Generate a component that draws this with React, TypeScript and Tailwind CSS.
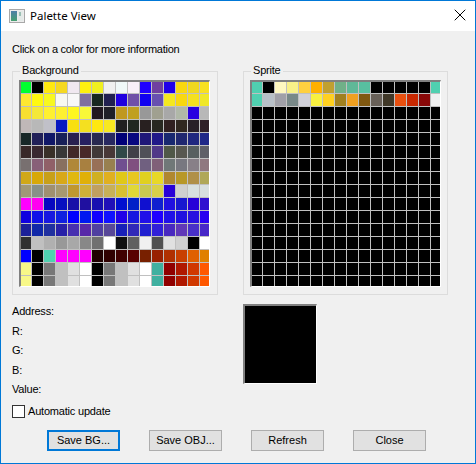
import { X } from 'lucide-react'

// ─── Palette data ─────────────────────────────────────────────────────────────

const K = '#000000'

const BG_PALETTE = [
  ['#00ff30', K, '#ffe810', '#f5d820', '#f0e8f0', '#fff010', '#f0f020', '#f0f0f0', '#f0f8f8', '#f8f0f8', '#2000ff', '#7040a0', '#2000e8', '#f8d810', '#f0d820', '#f8e020'],
  ['#ffe830', '#fff810', '#f8f820', '#f8f8f0', '#f8f8f8', '#806fa0', '#182820', '#202050', '#2000e0', '#7050a8', '#1000f0', '#6850b0', '#f4e820', '#f8d810', '#f4e020', '#f0e828'],
  ['#f8e030', '#f4e838', '#fff030', '#fff030', '#fff820', '#f8f838', '#201820', '#202028', '#c09820', '#c0a020', '#989898', '#a0a090', '#a8a8a8', '#b0b8a8', '#2800e0', '#b8b8b8'],
  ['#c0b8b8', '#b8b8b8', '#c0c0c8', '#0818c0', '#f8e010', '#f4e020', '#ffe810', '#f8e820', '#202020', '#202820', '#282020', '#282820', '#302020', '#302820', '#282028', '#302028'],
  ['#182828', '#202058', '#101868', '#182058', '#282050', '#282060', '#282850', '#282860', '#000078', '#080880', '#201878', '#201888', '#182870', '#202870', '#202880', '#202888'],
  ['#382828', '#382830', '#383028', '#383838', '#402828', '#482828', '#403838', '#483838', '#304848', '#404048', '#505058', '#503888', '#505848', '#585850', '#586060', '#606068'],
  ['#787070', '#886078', '#906068', '#887060', '#b08838', '#a88040', '#987058', '#988050', '#704f90', '#805080', '#706080', '#806078', '#707878', '#787880', '#888088', '#907880'],
  ['#d0a818', '#d8a808', '#c8a018', '#d8a818', '#e0b810', '#e0b008', '#d0b020', '#e0b020', '#e0c818', '#e8c820', '#e0d020', '#e8d828', '#b08830', '#b89828', '#b09048', '#b0a858'],
  ['#a09878', '#889088', '#a09070', '#a89870', '#c09830', '#d0b038', '#c0a060', '#c8b058', '#d8c030', '#e0d838', '#c8c850', '#d8d048', '#2800d8', '#d0d0d0', '#d8e0e0', '#d8e0e0'],
  ['#ff00ff', '#ff00f0', '#0808c0', '#0810c0', '#1810a8', '#2010a0', '#1810b0', '#2010b8', '#0010d0', '#0020c8', '#1010d0', '#1020d0', '#2010e0', '#1818d0', '#2800d8', '#3010d0'],
  ['#1000e0', '#1010e8', '#1818e0', '#1020e0', '#0000ff', '#0018f0', '#1000ff', '#1010ff', '#2000e8', '#1818e0', '#2010e8', '#2000ff', '#2010e8', '#2010e0', '#2810e0', '#2800f0'],
  ['#1c2098', '#1028a8', '#2030a0', '#2820a8', '#4830b0', '#5828a8', '#5040a0', '#584898', '#1820b8', '#3028b8', '#2020d0', '#3020d8', '#4828c0', '#6038b8', '#4830c8', '#4828c8'],
  ['#303030', '#c0c0c0', '#b0b0b0', '#989898', '#a8a8a8', '#888888', '#707070', '#ffffff', '#101010', '#606060', '#f0f0f0', '#505050', '#e0e0e0', '#d0d0d0', K, '#ffffff'],
  ['#0000ff', K, '#50d0b0', '#ff00ff', '#ff00ff', '#ff00ff', '#200000', '#300000', '#400000', '#580000', '#782000', '#982000', '#b03000', '#c84000', '#e06000', '#e08000'],
  ['#f8f888', K, '#787878', '#c0c0c0', '#e0e0e0', '#ffffff', K, '#787878', '#c0c0c0', '#e0e0e0', '#ffffff', '#40b0a0', '#900000', '#b01800', '#d03800', '#ff5800'],
  ['#f8f888', K, '#787878', '#c0c0c0', '#e0e0e0', '#ffffff', K, '#787878', '#c0c0c0', '#e0e0e0', '#ffffff', '#40b0a0', '#900000', '#b01800', '#d03800', '#ff5800'],
]

const SPRITE_PALETTE = [
  ['#50d0b0', K, '#fff8c0', '#f8f088', '#ffd040', '#ffb000', '#c0a030', '#70b088', '#60b898', '#58c0a0', K, K, K, K, K, '#50d0b0'],
  ['#50d0b0', '#b8c0c8', '#a0a0a8', '#788888', '#d0d0d8', '#f8f040', '#ffd020', '#a08020', '#f0a020', '#805810', '#686058', '#403828', '#e85010', '#c82800', '#880808', '#f0f0f0'],
  ...Array.from({ length: 14 }, () => Array<string>(16).fill(K)),
]

const INFO_LABELS = ['Address:', 'R:', 'G:', 'B:', 'Value:']

// ─── Pieces ───────────────────────────────────────────────────────────────────

function TitleIcon() {
  return (
    <svg width="16" height="16" viewBox="0 0 16 16" className="shrink-0">
      <defs>
        <linearGradient id="pane" x1="0" y1="0" x2="0" y2="1">
          <stop offset="0" stopColor="#4f7fa8" />
          <stop offset="1" stopColor="#45a070" />
        </linearGradient>
      </defs>
      <rect x="0.5" y="1.5" width="15" height="13" fill="#ececec" stroke="#a8a8a8" />
      <rect x="2" y="3" width="6" height="10" fill="url(#pane)" />
      <rect x="9" y="3" width="5" height="10" fill="#e4eae8" />
      <rect x="10" y="4" width="2" height="4" fill="#9cc0b4" />
    </svg>
  )
}

function PaletteGrid({ rows }: { rows: string[][] }) {
  return (
    <div className="w-[191px] border-t-2 border-l-2 border-t-[#808080] border-l-[#808080] border-r border-b border-r-white border-b-white">
      <div className="grid grid-cols-[10px_repeat(14,11px)_9px] grid-rows-[11px_repeat(14,12px)_10px] gap-px bg-[#c0c0c0]">
        {rows.flat().map((color, i) => (
          <div key={i} style={{ backgroundColor: color }} />
        ))}
      </div>
    </div>
  )
}

function PaletteGroup({ title, rows, className }: { title: string; rows: string[][]; className: string }) {
  return (
    <fieldset className={`border border-[#dcdcdc] pt-px pl-[6px] pb-[7px] ${className}`}>
      <legend className="ml-px h-4 px-[2px] leading-[14px] tracking-[-0.2px]">{title}</legend>
      <PaletteGrid rows={rows} />
    </fieldset>
  )
}

function DialogButton({ label, focused }: { label: string; focused?: boolean }) {
  return (
    <button
      className={`h-[21px] w-[73px] bg-[#e1e1e1] leading-none text-black ${
        focused ? 'border-2 border-[#0078d7]' : 'border border-[#adadad]'
      }`}
    >
      {label}
    </button>
  )
}

// ─── Window ───────────────────────────────────────────────────────────────────

export default function App() {
  return (
    <div className="flex h-[464px] w-[476px] flex-col border border-[#0078d7] bg-[#f0f0f0] font-['Liberation_Sans',sans-serif] text-[11px] leading-4 text-black">
      {/* Title bar */}
      <div className="flex h-[30px] items-center bg-white pr-[5px] pl-[8px]">
        <TitleIcon />
        <span className="ml-[5px] flex-1 font-['Noto_Sans',sans-serif] text-[11.5px]">Palette View</span>
        <X className="-mt-[2px] h-5 w-5 text-black" strokeWidth={1.2} />
      </div>

      {/* Body */}
      <div className="flex flex-1 flex-col pt-[10px] pl-[11px]">
        <p className="tracking-[-0.25px]">Click on a color for more information</p>

        <div className="mt-[6px] flex gap-[25px]">
          <PaletteGroup title="Background" rows={BG_PALETTE} className="w-[206px]" />
          <PaletteGroup title="Sprite" rows={SPRITE_PALETTE} className="w-[205px]" />
        </div>

        <div className="mt-[8px] flex">
          <div className="flex w-[231px] flex-col">
            <div className="flex flex-col gap-[3.5px] tracking-[-0.2px]">
              {INFO_LABELS.map((label) => (
                <span key={label}>{label}</span>
              ))}
            </div>
            <label className="mt-[6px] flex h-4 items-center gap-[3px] tracking-[-0.2px]">
              <span className="h-[13px] w-[13px] border border-[#333333] bg-white" />
              Automatic update
            </label>
          </div>
          <div className="mt-px h-[80px] w-[74px] border-t-2 border-l-2 border-t-[#808080] border-l-[#808080] border-r border-b border-r-white border-b-white bg-black" />
        </div>

        <div className="mt-[11px] flex gap-[29px] pl-[35px]">
          <DialogButton label="Save BG..." focused />
          <DialogButton label="Save OBJ..." />
          <DialogButton label="Refresh" />
          <DialogButton label="Close" />
        </div>
      </div>
    </div>
  )
}
